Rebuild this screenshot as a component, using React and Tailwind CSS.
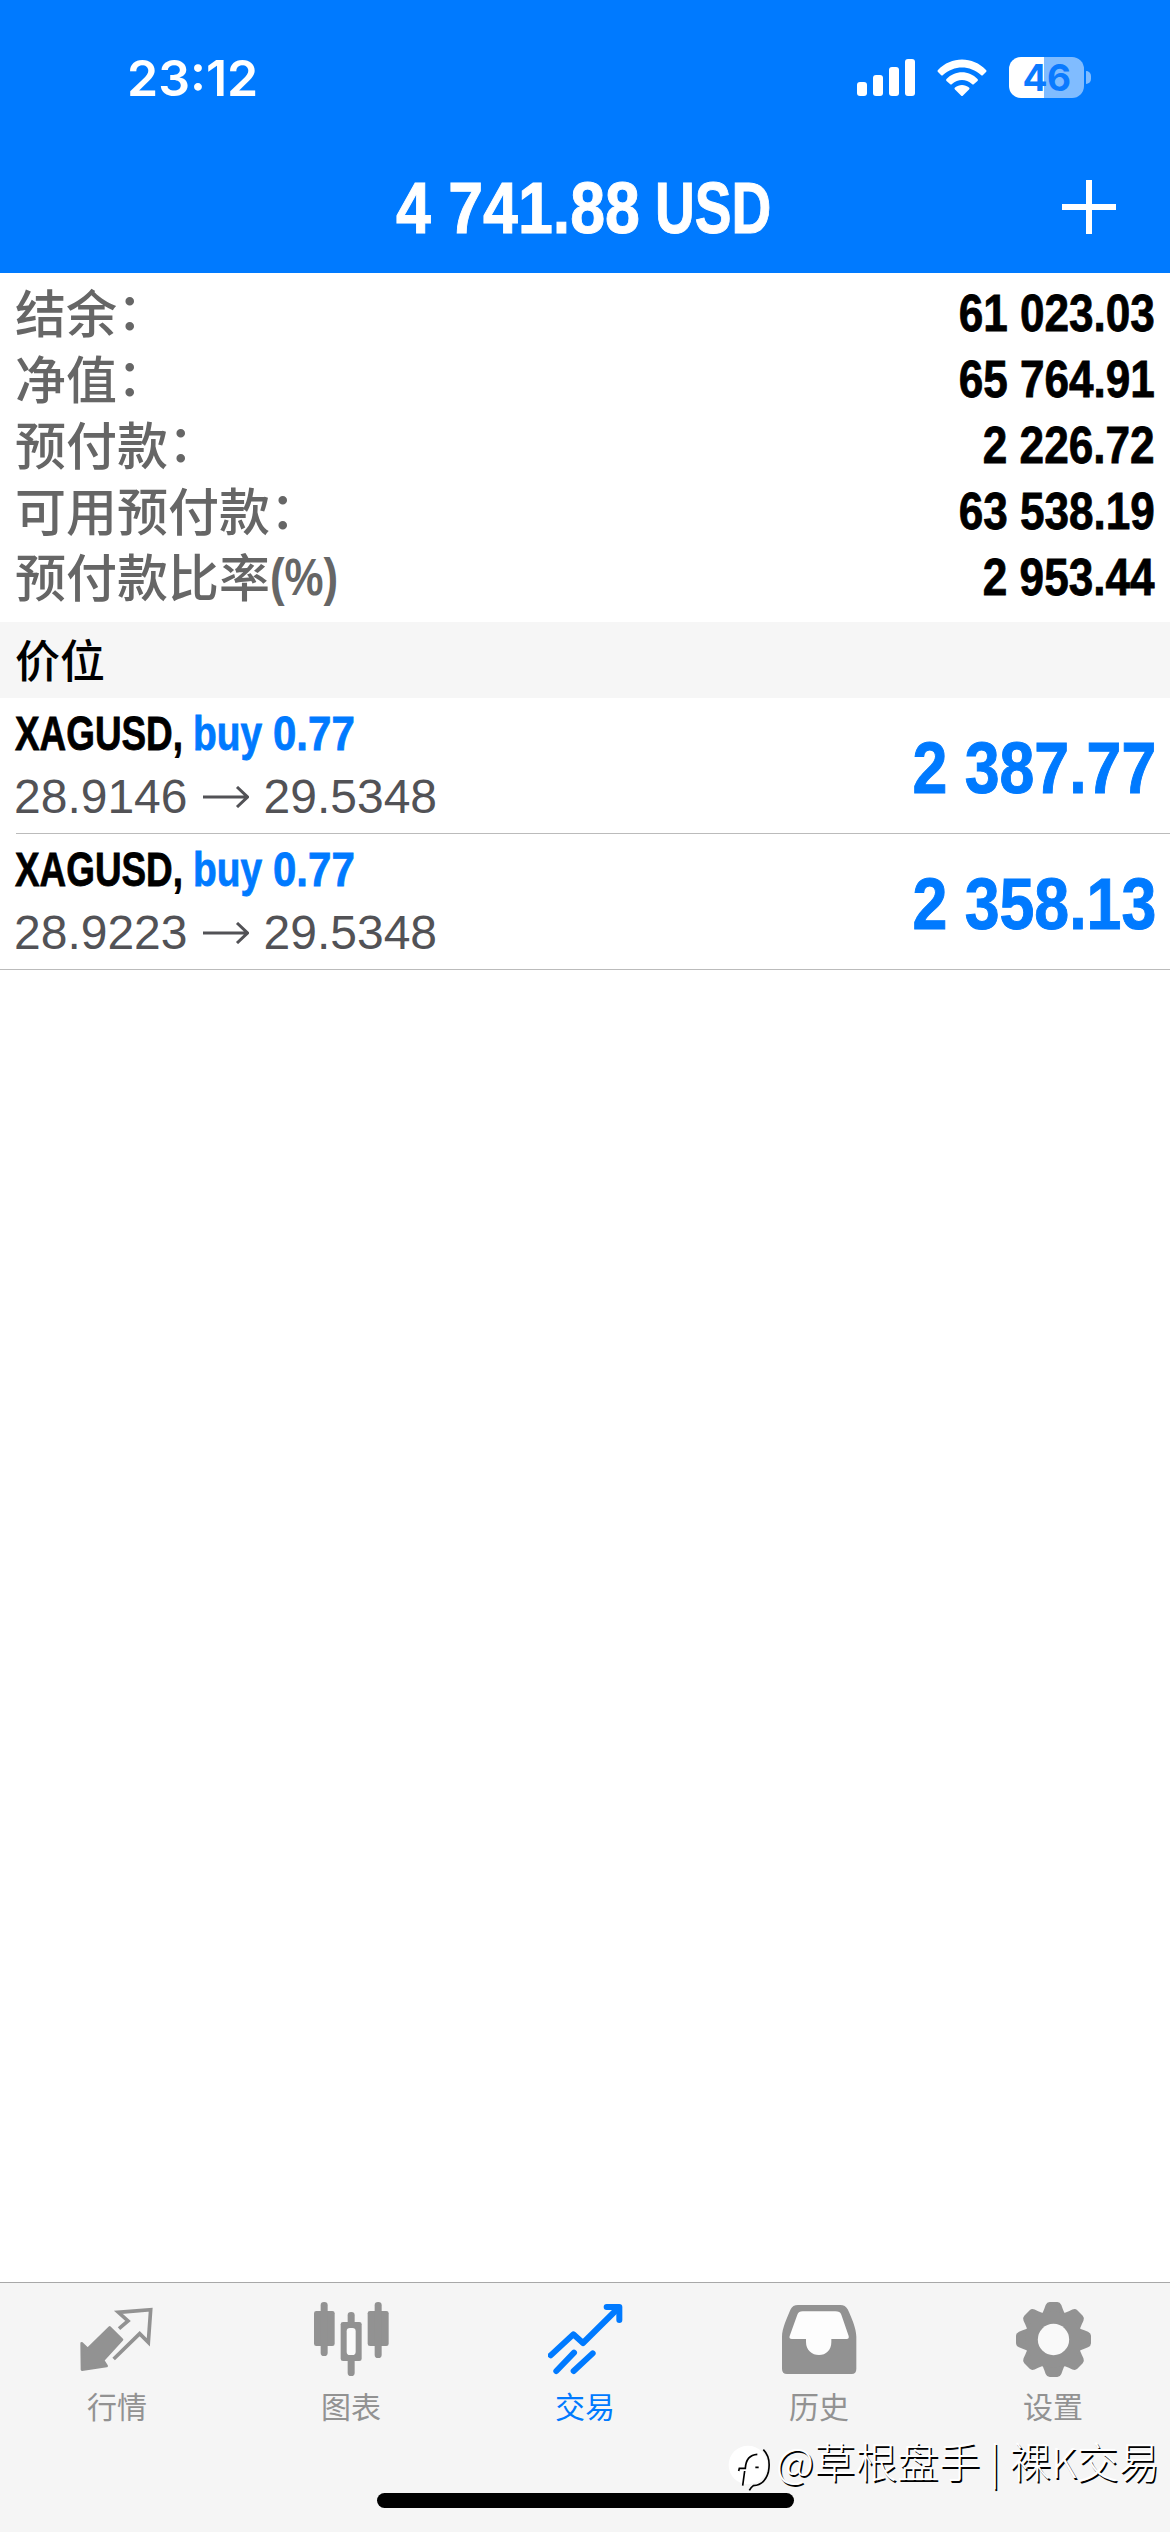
import React from 'react';

const account = [
  { label: '结余', colon: true, value: '61 023.03' },
  { label: '净值', colon: true, value: '65 764.91' },
  { label: '预付款', colon: true, value: '2 226.72' },
  { label: '可用预付款', colon: true, value: '63 538.19' },
  { label: '预付款比率', suffix: '(%)', value: '2 953.44' },
];

const positions = [
  { id: 1, symbol: 'XAGUSD,', side: 'buy', volume: '0.77', open: '28.9146', current: '29.5348', profit: '2 387.77' },
  { id: 2, symbol: 'XAGUSD,', side: 'buy', volume: '0.77', open: '28.9223', current: '29.5348', profit: '2 358.13' },
];

function QuotesIcon() {
  return (
    <svg viewBox="0 0 225 225" className="h-[75px] w-[75px]">
      <path d="M5 124 L23 141 L89 76 L126 113 L69 175 L80 192 L6 203 Z" fill="currentColor" stroke="currentColor" strokeWidth="8" strokeLinejoin="round" />
      <path d="M117 80 L144 57 L115 31 L212 23 L205 121 L179 95 L101 171" fill="none" stroke="currentColor" strokeWidth="11" />
    </svg>
  );
}

function ChartIcon() {
  return (
    <svg viewBox="0 0 225 225" className="h-[75px] w-[75px]" fill="currentColor">
      <rect x="0" y="27" width="62" height="105" rx="7" />
      <rect x="20" y="0" width="21" height="162" rx="10" />
      <rect x="101" y="30" width="21" height="192" rx="10" />
      <rect x="80" y="60" width="63" height="117" rx="7" />
      <rect x="98" y="78" width="27" height="81" rx="10" fill="#fafafa" />
      <rect x="161" y="27" width="63" height="105" rx="7" />
      <rect x="182" y="0" width="21" height="168" rx="10" />
    </svg>
  );
}

function TradeIcon() {
  return (
    <svg viewBox="0 0 225 225" className="h-[75px] w-[75px]" fill="none" stroke="currentColor" strokeWidth="18" strokeLinecap="round" strokeLinejoin="round">
      <path d="M8 160 L76 97 L105 123 L211 18" />
      <path d="M176 15 H214 V54" />
      <path d="M25 207 L78 152" />
      <path d="M77 207 L134 154" />
    </svg>
  );
}

function HistoryIcon() {
  return (
    <svg viewBox="0 0 225 225" className="h-[75px] w-[75px]">
      <path d="M0 104 C0 80 16 45 26 22 Q32 9 48 9 H175 Q190 9 197 22 C208 45 223 80 223 104 V200 Q223 216 209 216 H15 Q0 216 0 200 Z" fill="currentColor" />
      <path d="M62 28 H160 Q174 28 178 38 L200 102 Q202 111 194 111 H148 V120 C148 145 132 159 111 159 C90 159 72 145 72 120 V111 H30 Q20 111 23 102 L46 38 Q50 28 62 28 Z" fill="#fdfdfd" />
    </svg>
  );
}

function SettingsIcon() {
  const teeth = [0, 45, 90, 135, 180, 225, 270, 315];
  return (
    <svg viewBox="0 0 225 225" className="h-[75px] w-[75px]" fill="currentColor">
      {teeth.map((angle) => (
        <path
          key={angle}
          transform={`rotate(${angle} 112.5 112.5)`}
          d="M74 40 Q81 33 85 20 L89 9 Q93 0 101 0 H124 Q132 0 136 9 L140 20 Q144 33 151 40 Z"
        />
      ))}
      <circle cx="112.5" cy="112.5" r="84" />
      <circle cx="112.5" cy="112.5" r="47" fill="#f9f9f9" />
    </svg>
  );
}

const tabs = [
  { label: '行情', Icon: QuotesIcon },
  { label: '图表', Icon: ChartIcon },
  { label: '交易', Icon: TradeIcon, active: true },
  { label: '历史', Icon: HistoryIcon },
  { label: '设置', Icon: SettingsIcon },
];

function StatusBar() {
  return (
    <div className="flex h-[155px] items-center justify-between pr-[79px] pl-[127px] text-white">
      <span className="font-[Inter] text-[50px] leading-none font-semibold">23:12</span>
      <div className="flex items-center">
        <svg viewBox="0 0 58 37" className="h-[37px] w-[58px]" fill="currentColor">
          <rect x="0" y="23" width="10" height="14" rx="3" />
          <rect x="16" y="16" width="10" height="21" rx="3" />
          <rect x="32" y="8" width="10" height="29" rx="3" />
          <rect x="48" y="0" width="10" height="37" rx="3" />
        </svg>
        <svg viewBox="0 0 50 37" className="ml-[22px] h-[37px] w-[50px]" fill="currentColor">
          <path d="M1 11 C14 -3 36 -3 49 11 Q50 12 49 13 L46 16 Q45 17 44 16 C33 6 17 6 6 16 Q5 17 4 16 L1 13 Q0 12 1 11 Z" />
          <path d="M9.500 20 C18 11 32 11 40.500 20 Q41.500 21 40.500 22 L37 25 Q36 26 35 25 C29 19.500 21 19.500 15 25 Q14 26 13 25 L9.500 22 Q8.500 21 9.500 20 Z" />
          <path d="M18 28.500 C22 25 28 25 32 28.500 Q33 29.500 32 30.500 L26 36.500 Q25 37.500 24 36.500 L18 30.500 Q17 29.500 18 28.500 Z" />
        </svg>
        <div className="ml-[22px] flex h-[41px] w-[75px] items-center justify-center rounded-[12px] bg-linear-to-r from-white from-47% to-[#80bcff] to-47%">
          <span className="font-[Inter] text-[37px] leading-none font-bold tracking-[-0.5px] text-[#0a7aff]">46</span>
        </div>
        <span className="ml-[2px] h-[13px] w-[5px] rounded-r-full bg-[#80bcff]" />
      </div>
    </div>
  );
}

function PositionRow({ position }) {
  return (
    <div className="flex h-[135px] items-center justify-between pr-[14px] pl-[15px]">
      <div className="flex flex-col">
        <div className="flex h-[63px] items-center text-[48px] leading-none font-bold whitespace-nowrap [-webkit-text-stroke:0.8px]">
          <span className="w-[178px] origin-left scale-x-[0.768] text-black">{position.symbol}</span>
          <span className="w-[80px] origin-left scale-x-[0.81] text-[#007aff]">{position.side}</span>
          <span className="origin-left scale-x-[0.875] text-[#007aff]">{position.volume}</span>
        </div>
        <div className="-ml-px flex h-[63px] items-center text-[48px] leading-none text-[#525256]">
          <span>{position.open}</span>
          <svg viewBox="0 0 46 22" className="mx-[15px] h-[22px] w-[46px]" fill="none" stroke="currentColor" strokeWidth="3">
            <path d="M0 11 H44 M34 1 L44.500 11 L34 21" />
          </svg>
          <span>{position.current}</span>
        </div>
      </div>
      <span className="origin-right scale-x-[0.87] pt-[4px] text-[72px] leading-none font-bold text-[#007aff] [-webkit-text-stroke:1px]">
        {position.profit}
      </span>
    </div>
  );
}

export default function App() {
  return (
    <div className="flex h-[2532px] w-[1170px] flex-col overflow-hidden bg-white font-['Liberation_Sans','Noto_Sans_CJK_SC',sans-serif]">
      <header className="h-[273px] bg-[#007aff]">
        <StatusBar />
        <div className="flex h-[103px] items-center pr-[54px] pl-[396px] text-white">
          <h1 className="flex flex-1 pt-[2px] text-[72px] leading-none font-bold whitespace-nowrap [-webkit-text-stroke:1px]">
            <span className="w-[259px] origin-left scale-x-[0.87]">4 741.88</span>
            <span className="origin-left scale-x-[0.765]">USD</span>
          </h1>
          <svg viewBox="0 0 54 54" className="h-[54px] w-[54px]" stroke="currentColor" strokeWidth="6">
            <path d="M27 0 V54 M0 27 H54" />
          </svg>
        </div>
      </header>

      <section className="h-[349px] pt-[7px] pr-[15px] pl-[15px]">
        {account.map((item) => (
          <div key={item.label} className="flex h-[66.2px] items-center justify-between">
            <div className="flex items-center pb-[4px] text-[51px] leading-[51px] text-[#666]">
              <span className="font-['Noto_Sans_CJK_SC',sans-serif] font-medium">{item.label}</span>
              {item.colon && <span className="-mt-[5px] font-['Noto_Sans_CJK_SC',sans-serif] font-medium">：</span>}
              {item.suffix && <span className="mt-[3px] origin-left scale-x-[0.86] font-bold">{item.suffix}</span>}
            </div>
            <span className="origin-right scale-x-[0.865] text-[51px] leading-none font-bold text-black [-webkit-text-stroke:0.8px]">
              {item.value}
            </span>
          </div>
        ))}
      </section>

      <div className="flex h-[76px] items-center bg-[#f6f6f6] pb-[4px] pl-[15px] font-['Noto_Sans_CJK_SC',sans-serif] text-[45px] leading-none font-medium text-black">
        价位
      </div>

      <section className="flex-1">
        <PositionRow position={positions[0]} />
        <div className="ml-[16px] h-px bg-[#bbb]" />
        <PositionRow position={positions[1]} />
        <div className="h-px bg-[#bbb]" />
      </section>

      <nav className="relative flex h-[250px] flex-col items-center border-t border-[#a8a8a8] bg-[#f5f5f5]">
        <div className="flex w-full pt-[19px]">
          {tabs.map(({ label, Icon, active }) => (
            <div key={label} className={`flex flex-1 flex-col items-center ${active ? 'text-[#007aff]' : 'text-[#929292]'}`}>
              <Icon />
              <span className="mt-[10px] font-['Noto_Sans_CJK_SC',sans-serif] text-[30px] leading-[36px]">{label}</span>
            </div>
          ))}
        </div>
        <div className="mt-[70px] h-[15px] w-[417px] rounded-full bg-black" />
        <div className="absolute top-[153px] left-[728px] flex items-start">
          <svg viewBox="0 0 144 150" className="mt-[7px] h-[50px] w-[48px]" fill="none">
            <circle cx="60" cy="66" r="58" fill="#fff" />
            <path d="M32 84 L34 76 H52 Q54 36 88 34 M50 84 L44 128 M82 73 H92" stroke="#000" strokeWidth="5" />
            <path d="M106 20 Q130 44 121 88 Q110 126 76 128 Q68 134 64 142" stroke="#000" strokeWidth="5" />
          </svg>
          <span className="font-['Noto_Sans_CJK_SC',sans-serif] text-[41.6px] leading-[48px] font-light whitespace-nowrap text-white [text-shadow:1.5px_1.5px_0_#000]">
            @草根盘手 | 裸K交易
          </span>
        </div>
      </nav>
    </div>
  );
}
